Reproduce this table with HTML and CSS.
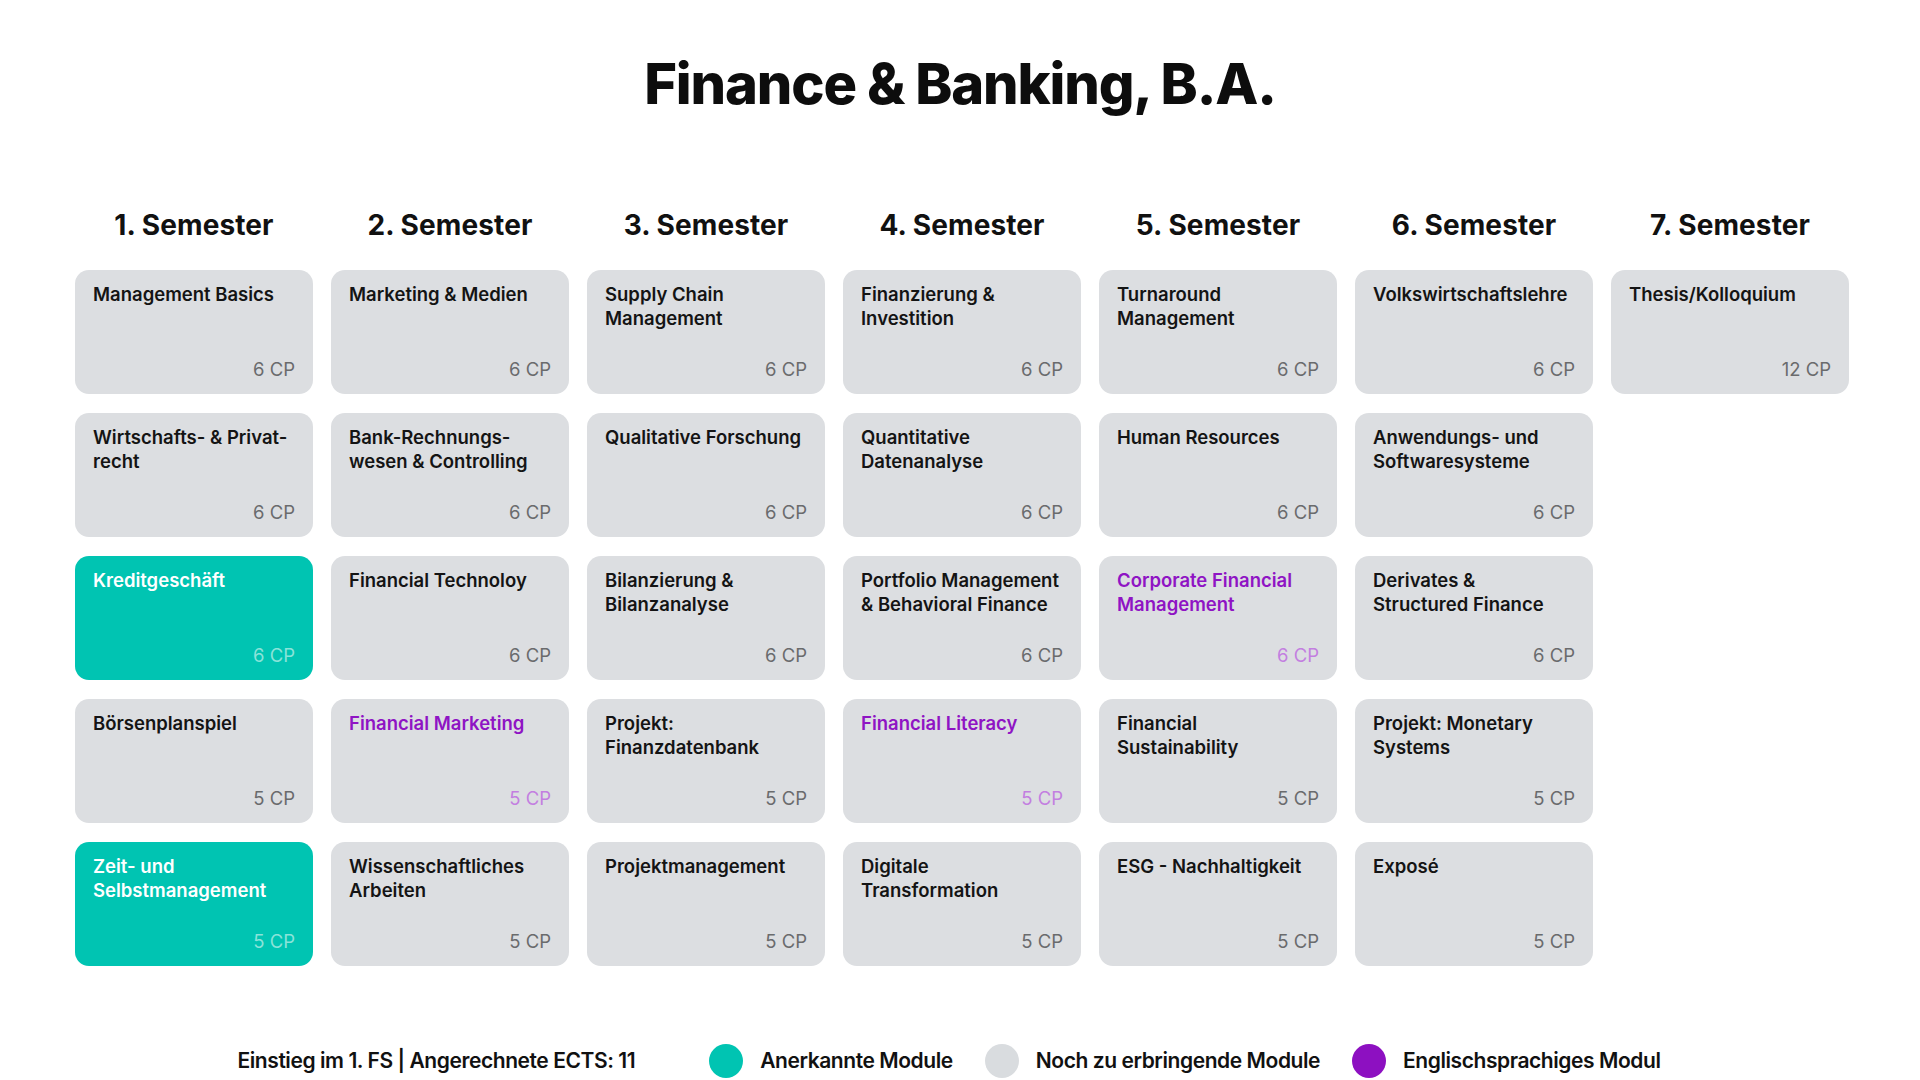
FILE: index.html
```html
<!DOCTYPE html>
<html lang="de">
<head>
<meta charset="utf-8">
<title>Finance &amp; Banking, B.A.</title>
<link rel="stylesheet" href="styles.css">
</head>
<body>
<main class="page">
  <h1 class="title">Finance &amp; Banking, B.A.</h1>

  <section class="semesters">
    <div class="semester">
      <h2 class="semester-title">1. Semester</h2>
      <div class="card"><span class="card-name">Management Basics</span><span class="card-cp">6 CP</span></div>
      <div class="card"><span class="card-name">Wirtschafts- &amp; Privat-<br>recht</span><span class="card-cp">6 CP</span></div>
      <div class="card card-done"><span class="card-name">Kreditgeschäft</span><span class="card-cp">6 CP</span></div>
      <div class="card"><span class="card-name">Börsenplanspiel</span><span class="card-cp">5 CP</span></div>
      <div class="card card-done"><span class="card-name">Zeit- und<br>Selbstmanagement</span><span class="card-cp">5 CP</span></div>
    </div>

    <div class="semester">
      <h2 class="semester-title">2. Semester</h2>
      <div class="card"><span class="card-name">Marketing &amp; Medien</span><span class="card-cp">6 CP</span></div>
      <div class="card"><span class="card-name">Bank-Rechnungs-<br>wesen &amp; Controlling</span><span class="card-cp">6 CP</span></div>
      <div class="card"><span class="card-name">Financial Technoloy</span><span class="card-cp">6 CP</span></div>
      <div class="card card-english"><span class="card-name">Financial Marketing</span><span class="card-cp">5 CP</span></div>
      <div class="card"><span class="card-name">Wissenschaftliches<br>Arbeiten</span><span class="card-cp">5 CP</span></div>
    </div>

    <div class="semester">
      <h2 class="semester-title">3. Semester</h2>
      <div class="card"><span class="card-name">Supply Chain<br>Management</span><span class="card-cp">6 CP</span></div>
      <div class="card"><span class="card-name">Qualitative Forschung</span><span class="card-cp">6 CP</span></div>
      <div class="card"><span class="card-name">Bilanzierung &amp;<br>Bilanzanalyse</span><span class="card-cp">6 CP</span></div>
      <div class="card"><span class="card-name">Projekt:<br>Finanzdatenbank</span><span class="card-cp">5 CP</span></div>
      <div class="card"><span class="card-name">Projektmanagement</span><span class="card-cp">5 CP</span></div>
    </div>

    <div class="semester">
      <h2 class="semester-title">4. Semester</h2>
      <div class="card"><span class="card-name">Finanzierung &amp;<br>Investition</span><span class="card-cp">6 CP</span></div>
      <div class="card"><span class="card-name">Quantitative<br>Datenanalyse</span><span class="card-cp">6 CP</span></div>
      <div class="card"><span class="card-name">Portfolio Management<br>&amp; Behavioral Finance</span><span class="card-cp">6 CP</span></div>
      <div class="card card-english"><span class="card-name">Financial Literacy</span><span class="card-cp">5 CP</span></div>
      <div class="card"><span class="card-name">Digitale<br>Transformation</span><span class="card-cp">5 CP</span></div>
    </div>

    <div class="semester">
      <h2 class="semester-title">5. Semester</h2>
      <div class="card"><span class="card-name">Turnaround<br>Management</span><span class="card-cp">6 CP</span></div>
      <div class="card"><span class="card-name">Human Resources</span><span class="card-cp">6 CP</span></div>
      <div class="card card-english"><span class="card-name">Corporate Financial<br>Management</span><span class="card-cp">6 CP</span></div>
      <div class="card"><span class="card-name">Financial<br>Sustainability</span><span class="card-cp">5 CP</span></div>
      <div class="card"><span class="card-name">ESG - Nachhaltigkeit</span><span class="card-cp">5 CP</span></div>
    </div>

    <div class="semester">
      <h2 class="semester-title">6. Semester</h2>
      <div class="card"><span class="card-name">Volkswirtschaftslehre</span><span class="card-cp">6 CP</span></div>
      <div class="card"><span class="card-name">Anwendungs- und<br>Softwaresysteme</span><span class="card-cp">6 CP</span></div>
      <div class="card"><span class="card-name">Derivates &amp;<br>Structured Finance</span><span class="card-cp">6 CP</span></div>
      <div class="card"><span class="card-name">Projekt: Monetary<br>Systems</span><span class="card-cp">5 CP</span></div>
      <div class="card"><span class="card-name">Exposé</span><span class="card-cp">5 CP</span></div>
    </div>

    <div class="semester">
      <h2 class="semester-title">7. Semester</h2>
      <div class="card"><span class="card-name">Thesis/Kolloquium</span><span class="card-cp">12 CP</span></div>
    </div>
  </section>

  <footer class="legend">
    <span class="legend-info">Einstieg im 1. FS | Angerechnete ECTS: 11</span>
    <span class="legend-item"><span class="dot dot-done"></span>Anerkannte Module</span>
    <span class="legend-item"><span class="dot dot-open"></span>Noch zu erbringende Module</span>
    <span class="legend-item"><span class="dot dot-english"></span>Englischsprachiges Modul</span>
  </footer>
</main>
</body>
</html>
```

FILE: styles.css
```css
* {
  box-sizing: border-box;
}

html, body {
  margin: 0;
  padding: 0;
  background: #ffffff;
}

body {
  font-family: "Inter", "Liberation Sans", sans-serif;
  color: #111111;
  width: 1920px;
  height: 1080px;
  overflow: hidden;
}

.page {
  display: flex;
  flex-direction: column;
  padding-top: 50px;
}

.title {
  margin: 0;
  font-size: 56px;
  line-height: 68px;
  font-weight: 800;
  letter-spacing: -1.15px;
  text-align: center;
  color: #0d0d0d;
}

.semesters {
  margin-top: 91px;
  margin-left: 75px;
  display: grid;
  grid-template-columns: repeat(7, 238px);
  column-gap: 18px;
  align-items: start;
}

.semester {
  display: flex;
  flex-direction: column;
  gap: 19px;
}

.semester-title {
  margin: 0 0 10px;
  font-size: 28px;
  line-height: 32px;
  font-weight: 700;
  letter-spacing: 0.1px;
  text-align: center;
  color: #111111;
}

.card {
  height: 124px;
  border-radius: 14px;
  background: #dcdee1;
  padding: 12px 18px 13px 18px;
  display: flex;
  flex-direction: column;
  justify-content: space-between;
}

.card-name {
  font-size: 18.5px;
  line-height: 24px;
  font-weight: 600;
  letter-spacing: 0;
  white-space: nowrap;
  color: #141414;
}

.card-cp {
  align-self: flex-end;
  font-size: 18.5px;
  line-height: 24px;
  font-weight: 400;
  letter-spacing: 0;
  color: #6a6b6d;
}

.card-done {
  background: #00c4b2;
}

.card-done .card-name {
  color: #ffffff;
}

.card-done .card-cp {
  color: #8ae3d9;
}

.card-english .card-name {
  color: #8f14c4;
}

.card-english .card-cp {
  color: #c37fe0;
}

.legend {
  margin-top: 78px;
  padding-right: 22px;
  display: flex;
  justify-content: center;
  align-items: center;
  font-size: 21px;
  line-height: 34px;
  font-weight: 600;
  letter-spacing: -0.43px;
  color: #111111;
}

.legend-info {
  margin-right: 74px;
}

.legend-item {
  display: inline-flex;
  align-items: center;
  gap: 17px;
  margin-right: 32px;
}

.legend-item:last-child {
  margin-right: 0;
}

.dot {
  width: 34px;
  height: 34px;
  border-radius: 50%;
  display: inline-block;
}

.dot-done {
  background: #00c4b2;
}

.dot-open {
  background: #d9dcdf;
}

.dot-english {
  background: #8d10c1;
}
```
